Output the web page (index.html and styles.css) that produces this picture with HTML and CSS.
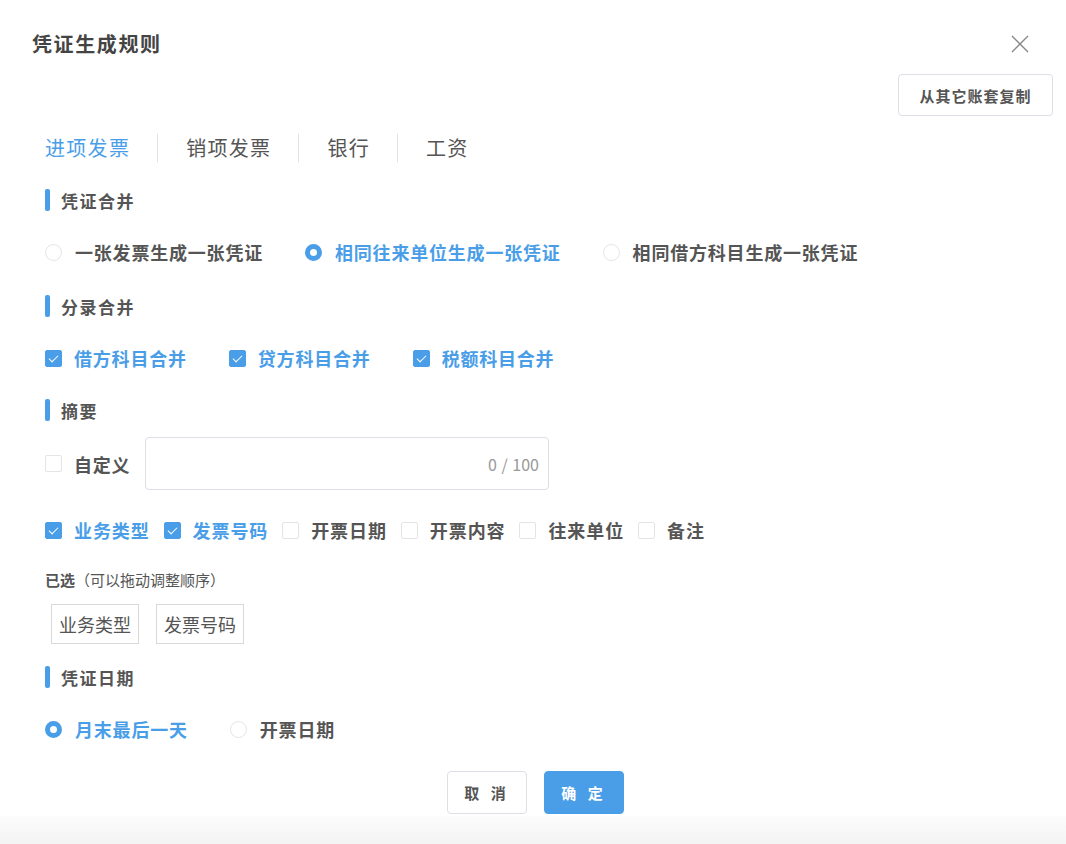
FILE: index.html
```html
<!DOCTYPE html>
<html lang="zh-CN">
<head>
  <meta charset="UTF-8">
  <title>凭证生成规则</title>
  <link rel="stylesheet" href="styles.css">
</head>
<body>

<div class="dialog">
  <!-- header -->
  <div class="dialog-header">
    <h2 class="dialog-title">凭证生成规则</h2>
    <span class="close-btn">
      <svg width="18" height="18" viewBox="0 0 18 18"><path d="M1 1L17 17M17 1L1 17" stroke="#888" stroke-width="1.4" fill="none"/></svg>
    </span>
  </div>

  <div class="copy-row">
    <button class="btn btn-copy">从其它账套复制</button>
  </div>

  <!-- tabs -->
  <div class="tabs">
    <span class="tab active">进项发票</span>
    <span class="tab">销项发票</span>
    <span class="tab">银行</span>
    <span class="tab">工资</span>
  </div>

  <div class="body">
    <div class="section-title s1">凭证合并</div>
    <div class="opt-row">
      <label class="radio"><span class="radio-dot"></span>一张发票生成一张凭证</label>
      <label class="radio checked"><span class="radio-dot"></span>相同往来单位生成一张凭证</label>
      <label class="radio"><span class="radio-dot"></span>相同借方科目生成一张凭证</label>
    </div>

    <div class="section-title s2">分录合并</div>
    <div class="opt-row">
      <label class="check checked"><span class="check-box"></span>借方科目合并</label>
      <label class="check checked"><span class="check-box"></span>贷方科目合并</label>
      <label class="check checked"><span class="check-box"></span>税额科目合并</label>
    </div>

    <div class="section-title s3">摘要</div>
    <div class="custom-row">
      <label class="check"><span class="check-box"></span>自定义</label>
      <div class="text-input"><span class="counter">0 / 100</span></div>
    </div>
    <div class="opt-row tight">
      <label class="check checked"><span class="check-box"></span>业务类型</label>
      <label class="check checked"><span class="check-box"></span>发票号码</label>
      <label class="check"><span class="check-box"></span>开票日期</label>
      <label class="check"><span class="check-box"></span>开票内容</label>
      <label class="check"><span class="check-box"></span>往来单位</label>
      <label class="check"><span class="check-box"></span>备注</label>
    </div>

    <p class="selected-hint"><b>已选</b>（可以拖动调整顺序）</p>
    <div class="tags">
      <span class="tag">业务类型</span>
      <span class="tag">发票号码</span>
    </div>

    <div class="section-title s4">凭证日期</div>
    <div class="opt-row">
      <label class="radio checked"><span class="radio-dot"></span>月末最后一天</label>
      <label class="radio"><span class="radio-dot"></span>开票日期</label>
    </div>
  </div>

  <div class="footer">
    <button class="btn btn-cancel">取 消</button>
    <button class="btn btn-ok">确 定</button>
  </div>
</div>
<div class="shade"></div>

</body>
</html>
```

FILE: styles.css
```css
body {
  margin: 0;
  background: #fff;
  font-family: "Noto Sans CJK SC", "Noto Sans", sans-serif;
  color: #555;
}
.dialog {
  padding: 0 13px 0 0;
}
.dialog-header {
  display: flex;
  justify-content: space-between;
  align-items: center;
  padding: 30px 24px 0 32px;
}
.dialog-title {
  margin: 0;
  font-size: 20px;
  line-height: 28px;
  letter-spacing: 1.6px;
  font-weight: bold;
  color: #444;
}
.close-btn {
  display: flex;
  width: 18px;
  height: 18px;
}
.copy-row {
  display: flex;
  justify-content: flex-end;
  margin-top: 16px;
}
.btn {
  font-family: inherit;
  cursor: pointer;
  border-radius: 4px;
  font-weight: bold;
  font-size: 15px;
}
.btn-copy {
  height: 42px;
  width: 155px;
  background: #fff;
  border: 1px solid #dcdfe6;
  color: #555;
  letter-spacing: 1px;
}
.tabs {
  display: flex;
  align-items: center;
  margin: 18px 0 0 45px;
}
.tab {
  font-size: 20px;
  line-height: 28px;
  letter-spacing: 1.3px;
  padding: 0 27px 0 28px;
  border-left: 1px solid #e2e2e2;
  color: #555;
}
.tab:first-child {
  padding-left: 0;
  border-left: none;
}
.tab.active {
  color: #4a9ee8;
}
.body {
  padding-left: 45px;
}
.section-title {
  display: flex;
  align-items: center;
  height: 22px;
  font-size: 17px;
  letter-spacing: 1.5px;
  font-weight: bold;
  color: #555;
}
.section-title::before {
  content: "";
  width: 5px;
  height: 22px;
  border-radius: 2px;
  background: #4a9ee8;
  margin-right: 11px;
}
.s1 { margin-top: 27px; }
.s2 { margin-top: 30px; }
.s3 { margin-top: 28px; }
.s4 { margin-top: 22px; }
.opt-row {
  display: flex;
  align-items: center;
  height: 26px;
  gap: 42px;
  margin-top: 28px;
}
.opt-row.tight {
  gap: 14px;
  margin-top: 27px;
}
.opt-row.tight .check {
  letter-spacing: 0.9px;
}
.radio,
.check {
  display: flex;
  align-items: center;
  font-size: 18px;
  letter-spacing: 0.8px;
  font-weight: bold;
  color: #555;
  white-space: nowrap;
}
.radio.checked,
.check.checked {
  color: #4a9ee8;
}
.radio-dot {
  width: 17px;
  height: 17px;
  box-sizing: border-box;
  border: 1px solid #e2e4e8;
  border-radius: 50%;
  margin-right: 13px;
  background: #fff;
}
.radio.checked .radio-dot {
  border: 5px solid #4a9ee8;
  background: #fff;
}
.check-box {
  width: 17px;
  height: 17px;
  box-sizing: border-box;
  border: 1px solid #e2e4e8;
  border-radius: 2px;
  margin-right: 12px;
  background: #fff;
  position: relative;
}
.check.checked .check-box {
  background: #4a9ee8;
  border-color: #4a9ee8;
}
.check.checked .check-box::after {
  content: "";
  position: absolute;
  left: 5px;
  top: 2px;
  width: 4px;
  height: 8px;
  border: solid #fff;
  border-width: 0 1.5px 1.5px 0;
  transform: rotate(45deg);
}
.custom-row {
  display: flex;
  align-items: center;
  margin-top: 16px;
}
.custom-row .check {
  width: 100px;
}
.text-input {
  width: 404px;
  height: 53px;
  box-sizing: border-box;
  border: 1px solid #dcdfe6;
  border-radius: 4px;
  display: flex;
  align-items: center;
  justify-content: flex-end;
  padding-right: 9px;
}
.counter {
  font-size: 16px;
  color: #999;
  word-spacing: 1px;
}
.selected-hint {
  margin: 27px 0 0;
  font-size: 15px;
  line-height: 20px;
  color: #555;
}
.selected-hint b {
  font-weight: bold;
}
.tags {
  display: flex;
  gap: 17px;
  margin: 14px 0 0 6px;
}
.tag {
  height: 40px;
  box-sizing: border-box;
  border: 1px solid #d8d8d8;
  font-size: 18px;
  line-height: 38px;
  padding: 0 7px;
  color: #555;
}
.footer {
  display: flex;
  justify-content: center;
  gap: 17px;
  margin-top: 29px;
  padding-left: 18px;
}
.btn-cancel,
.btn-ok {
  width: 80px;
  height: 43px;
  letter-spacing: 4px;
}
.btn-cancel {
  background: #fff;
  border: 1px solid #dcdfe6;
  color: #555;
}
.btn-ok {
  background: #4a9ee8;
  border: 1px solid #4a9ee8;
  color: #fff;
}
.shade {
  height: 40px;
  margin-top: 2px;
  background: linear-gradient(#fcfcfc, #f0f0f0);
}
```
